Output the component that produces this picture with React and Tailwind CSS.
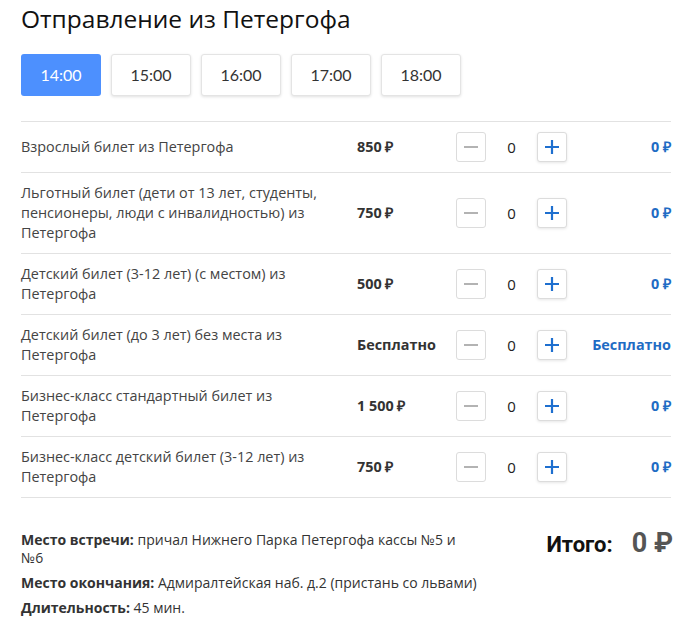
const times = ["14:00", "15:00", "16:00", "17:00", "18:00"];

const tickets = [
  { name: "Взрослый билет из Петергофа", price: "850 ₽", total: "0 ₽" },
  {
    name: "Льготный билет (дети от 13 лет, студенты, пенсионеры, люди с инвалидностью) из Петергофа",
    price: "750 ₽",
    total: "0 ₽",
  },
  { name: "Детский билет (3-12 лет) (с местом) из Петергофа", price: "500 ₽", total: "0 ₽" },
  { name: "Детский билет (до 3 лет) без места из Петергофа", price: "Бесплатно", total: "Бесплатно" },
  { name: "Бизнес-класс стандартный билет из Петергофа", price: "1 500 ₽", total: "0 ₽" },
  { name: "Бизнес-класс детский билет (3-12 лет) из Петергофа", price: "750 ₽", total: "0 ₽" },
];

const App = () => {
  return (
    <div className="w-[690px] bg-white px-[21px] pt-[3px] pb-4 font-['Open_Sans',sans-serif] text-[#333]">
      <h1 className="text-[24.5px] leading-[32px] text-[#111]">Отправление из Петергофа</h1>

      <div className="mt-[19px] flex gap-[10px] font-['Lato',sans-serif]">
        {times.map((t, i) => (
          <button
            key={t}
            className={
              i === 0
                ? "h-[42px] w-[80px] rounded-[3px] bg-[#4d90fe] text-[16px] text-white"
                : "h-[42px] w-[80px] rounded-[3px] border border-[#e4e4e4] bg-white text-[16px] text-[#333] shadow-[0_1px_3px_rgba(0,0,0,0.12)]"
            }
          >
            {t}
          </button>
        ))}
      </div>

      <div className="mt-[25px] w-[650px] border-b border-[#e2e2e2]">
        {tickets.map((t) => (
          <div
            key={t.name}
            className="flex min-h-[50px] items-center border-t border-[#e2e2e2] py-[10px]"
          >
            <div className="w-[320px] text-[14.4px] leading-[20px] text-[#444]">{t.name}</div>
            <div className="ml-[16px] w-[99px] text-[14.4px] font-bold text-[#333]">{t.price}</div>
            <div className="flex items-center">
              <button className="flex h-[30px] w-[30px] items-center justify-center rounded-[3px] border border-[#dcdcdc] bg-white">
                <span className="block h-[2px] w-[14px] bg-[#b3b3b3]" />
              </button>
              <span className="w-[51px] text-center text-[15px] text-[#222]">0</span>
              <button className="flex h-[30px] w-[30px] items-center justify-center rounded-[3px] border border-[#dcdcdc] bg-white shadow-[0_1px_3px_rgba(0,0,0,0.1)]">
                <svg width="16" height="16" viewBox="0 0 16 16">
                  <path d="M8 1v14M1 8h14" stroke="#1e6fcf" strokeWidth="2.2" />
                </svg>
              </button>
            </div>
            <div className="ml-auto text-[14.4px] font-bold text-[#1f6cc4]">{t.total}</div>
          </div>
        ))}
      </div>

      <div className="mt-[33px] flex justify-between">
        <div className="w-[470px] text-[14px] leading-[18px] text-[#333]">
          <p>
            <b>Место встречи:</b> причал Нижнего Парка Петергофа кассы №5 и
            <br />
            №6
          </p>
          <p className="mt-[7px]">
            <b>Место окончания:</b> Адмиралтейская наб. д.2 (пристань со львами)
          </p>
          <p className="mt-[7px]">
            <b>Длительность:</b> 45 мин.
          </p>
        </div>
        <div className="-mr-[4px] -mt-[8px] flex items-baseline gap-[19px] self-start font-['Liberation_Sans_Narrow','Roboto',sans-serif]">
          <span className="text-[22px] font-bold text-[#111]">Итого:</span>
          <span className="text-[27px] font-bold text-[#555]">0 ₽</span>
        </div>
      </div>
    </div>
  );
};

export default App;
